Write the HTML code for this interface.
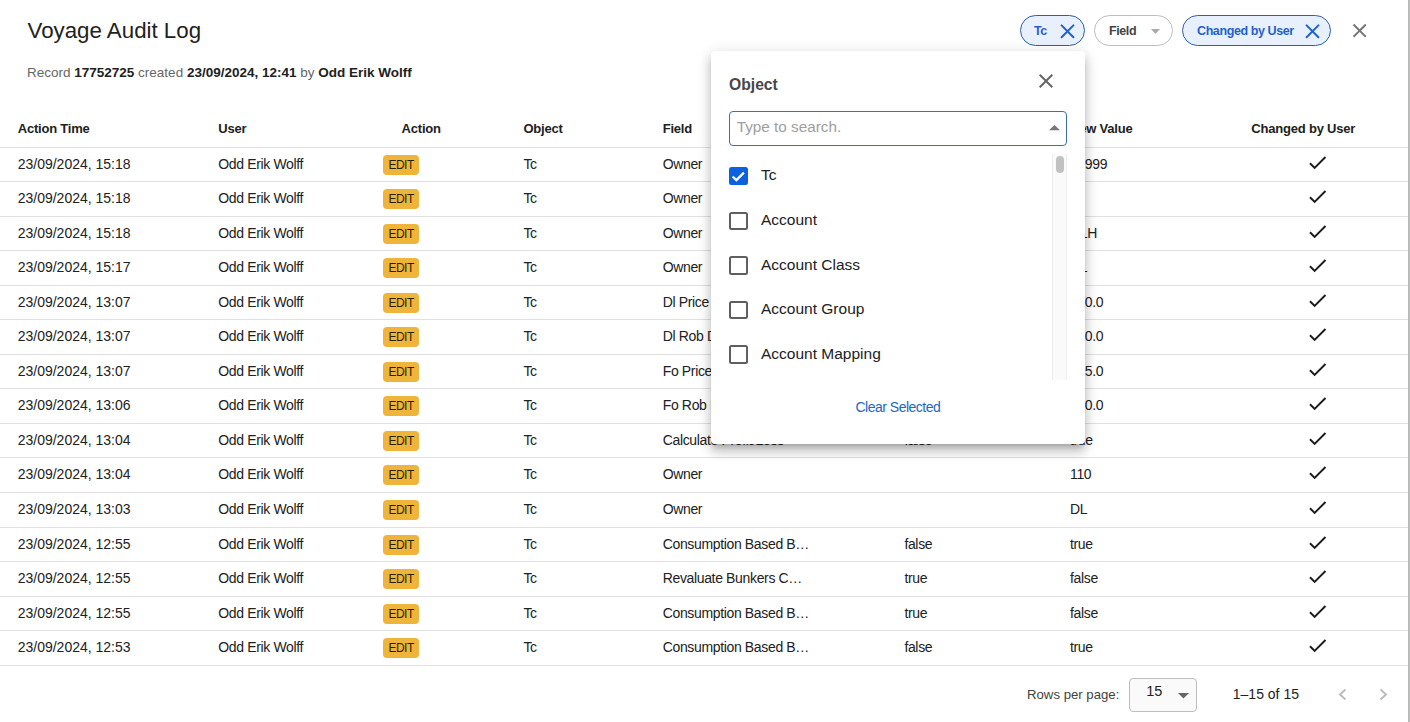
<!DOCTYPE html>
<html><head><meta charset="utf-8">
<style>
*{box-sizing:border-box;margin:0;padding:0}
html,body{width:1410px;height:722px;overflow:hidden;background:#bdbdbd;font-family:"Liberation Sans",sans-serif;color:#212121}
.dlg{position:absolute;left:0;top:0;width:1408px;height:740px;background:#fff;border-radius:0 0 4px 0;overflow:hidden}
.a{position:absolute;white-space:nowrap;line-height:1}
.title{left:27.5px;top:20px;font-size:22.3px;color:#212121}
.sub{left:27px;top:65.8px;font-size:13.5px;color:#666}
.sub b{color:#212121}
.hd{font-size:13px;font-weight:bold;letter-spacing:-0.2px;color:#212121}
.line{position:absolute;left:0;width:1408px;height:1px;background:#e0e0e0}
.c{font-size:14px;letter-spacing:-0.35px;color:#212121}
.edit{position:absolute;width:35.5px;height:19.5px;border-radius:4px;background:#efb43a;font-size:12px;letter-spacing:-0.5px;color:#2a1f00;line-height:21px;text-align:center;padding-left:0.5px}
.chip{position:absolute;top:15.3px;height:30.4px;border-radius:16px;border:1.3px solid #2d5eae;background:#e8f0fd}
.chip span{position:absolute;font-size:12.5px;font-weight:bold;letter-spacing:-0.4px;color:#1f62c9;line-height:1;top:8.5px}
.pop{position:absolute;left:711px;top:51px;width:374px;height:392.7px;background:#fff;border-radius:4px;
 box-shadow:0px 5px 5px -3px rgba(0,0,0,0.2),0px 8px 10px 1px rgba(0,0,0,0.14),0px 3px 14px 2px rgba(0,0,0,0.12)}
.cb{position:absolute;left:18px;width:18.5px;height:18.5px;border:2px solid #5f5f5f;border-radius:2.5px}
.cbl{position:absolute;left:50px;font-size:15.5px;color:#212121;line-height:1}
</style></head><body>
<div class="dlg">
  <div class="a title">Voyage Audit Log</div>
  <div class="a sub">Record <b>17752725</b> created <b>23/09/2024, 12:41</b> by <b>Odd Erik Wolff</b></div>

  <!-- chips -->
  <div class="chip" style="left:1020px;width:65px"><span style="left:13px">Tc</span>
    <svg style="position:absolute;left:38.5px;top:7.6px" width="16" height="16" viewBox="0 0 16 16"><path d="M1.6 1.4L13.4 13.2M13.4 1.4L1.6 13.2" stroke="#1f62c9" stroke-width="2" stroke-linecap="round"/></svg>
  </div>
  <div class="chip" style="left:1094px;width:79px;border:1px solid #bdbdbd;background:#fff"><span style="left:14px;color:#444">Field</span>
    <svg style="position:absolute;left:56px;top:13px" width="9" height="6" viewBox="0 0 9 6"><path d="M0 0L9 0L4.5 5z" fill="#aaa"/></svg>
  </div>
  <div class="chip" style="left:1182px;width:149px"><span style="left:14px">Changed by User</span>
    <svg style="position:absolute;left:121.5px;top:7.6px" width="16" height="16" viewBox="0 0 16 16"><path d="M1.6 1.4L13.4 13.2M13.4 1.4L1.6 13.2" stroke="#1f62c9" stroke-width="2" stroke-linecap="round"/></svg>
  </div>
  <svg style="position:absolute;left:1348.4px;top:18.7px" width="23.3" height="23.3" viewBox="0 0 24 24"><path fill="#757575" d="M19 6.41 17.59 5 12 10.59 6.41 5 5 6.41 10.59 12 5 17.59 6.41 19 12 13.41 17.59 19 19 17.59 13.41 12z"/></svg>

  <!-- table -->
  <div class="a hd" style="left:17.7px;top:122.0px">Action Time</div>
<div class="a hd" style="left:218.3px;top:122.0px">User</div>
<div class="a hd" style="left:401.6px;top:122.0px">Action</div>
<div class="a hd" style="left:523.4px;top:122.0px">Object</div>
<div class="a hd" style="left:662.7px;top:122.0px">Field</div>
<div class="a hd" style="left:904.4px;top:122.0px">Old Value</div>
<div class="a hd" style="left:1070px;top:122.0px">New Value</div>
<div class="a hd" style="left:1251.3px;top:122.0px">Changed by User</div>
<div class="line" style="top:147px"></div>
<div class="line" style="top:181px"></div>
<div class="line" style="top:216px"></div>
<div class="line" style="top:250px"></div>
<div class="line" style="top:285px"></div>
<div class="line" style="top:319px"></div>
<div class="line" style="top:354px"></div>
<div class="line" style="top:388px"></div>
<div class="line" style="top:423px"></div>
<div class="line" style="top:457px"></div>
<div class="line" style="top:492px"></div>
<div class="line" style="top:527px"></div>
<div class="line" style="top:561px"></div>
<div class="line" style="top:596px"></div>
<div class="line" style="top:630px"></div>
<div class="line" style="top:665px"></div>
<div class="a c" style="left:17.7px;top:157.10px;letter-spacing:0">23/09/2024, 15:18</div>
<div class="a c" style="left:218.3px;top:157.15px">Odd Erik Wolff</div>
<div class="edit" style="left:383.1px;top:155.20px">EDIT</div>
<div class="a c" style="left:523.4px;top:157.15px">Tc</div>
<div class="a c" style="left:662.7px;top:157.15px">Owner</div>
<div class="a c" style="left:1070px;top:157.15px">99999</div>
<svg style="position:absolute;left:1305.8px;top:151.10px" width="23.05" height="23.05" viewBox="0 0 24 24"><path fill="#1c1c1c" d="M9 16.17 4.83 12l-1.42 1.41L9 19 21 7l-1.41-1.41z"/></svg>
<div class="a c" style="left:17.7px;top:191.10px;letter-spacing:0">23/09/2024, 15:18</div>
<div class="a c" style="left:218.3px;top:191.15px">Odd Erik Wolff</div>
<div class="edit" style="left:383.1px;top:189.20px">EDIT</div>
<div class="a c" style="left:523.4px;top:191.15px">Tc</div>
<div class="a c" style="left:662.7px;top:191.15px">Owner</div>
<svg style="position:absolute;left:1305.8px;top:185.10px" width="23.05" height="23.05" viewBox="0 0 24 24"><path fill="#1c1c1c" d="M9 16.17 4.83 12l-1.42 1.41L9 19 21 7l-1.41-1.41z"/></svg>
<div class="a c" style="left:17.7px;top:226.10px;letter-spacing:0">23/09/2024, 15:18</div>
<div class="a c" style="left:218.3px;top:226.15px">Odd Erik Wolff</div>
<div class="edit" style="left:383.1px;top:224.20px">EDIT</div>
<div class="a c" style="left:523.4px;top:226.15px">Tc</div>
<div class="a c" style="left:662.7px;top:226.15px">Owner</div>
<div class="a c" style="left:1070px;top:226.15px">DLH</div>
<svg style="position:absolute;left:1305.8px;top:220.10px" width="23.05" height="23.05" viewBox="0 0 24 24"><path fill="#1c1c1c" d="M9 16.17 4.83 12l-1.42 1.41L9 19 21 7l-1.41-1.41z"/></svg>
<div class="a c" style="left:17.7px;top:260.10px;letter-spacing:0">23/09/2024, 15:17</div>
<div class="a c" style="left:218.3px;top:260.15px">Odd Erik Wolff</div>
<div class="edit" style="left:383.1px;top:258.20px">EDIT</div>
<div class="a c" style="left:523.4px;top:260.15px">Tc</div>
<div class="a c" style="left:662.7px;top:260.15px">Owner</div>
<div class="a c" style="left:1070px;top:260.15px">DL</div>
<svg style="position:absolute;left:1305.8px;top:254.10px" width="23.05" height="23.05" viewBox="0 0 24 24"><path fill="#1c1c1c" d="M9 16.17 4.83 12l-1.42 1.41L9 19 21 7l-1.41-1.41z"/></svg>
<div class="a c" style="left:17.7px;top:295.10px;letter-spacing:0">23/09/2024, 13:07</div>
<div class="a c" style="left:218.3px;top:295.15px">Odd Erik Wolff</div>
<div class="edit" style="left:383.1px;top:293.20px">EDIT</div>
<div class="a c" style="left:523.4px;top:295.15px">Tc</div>
<div class="a c" style="left:662.7px;top:295.15px">Dl Price Bunkers</div>
<div class="a c" style="left:904.4px;top:295.15px">100.0</div>
<div class="a c" style="left:1070px;top:295.15px">100.0</div>
<svg style="position:absolute;left:1305.8px;top:289.10px" width="23.05" height="23.05" viewBox="0 0 24 24"><path fill="#1c1c1c" d="M9 16.17 4.83 12l-1.42 1.41L9 19 21 7l-1.41-1.41z"/></svg>
<div class="a c" style="left:17.7px;top:329.10px;letter-spacing:0">23/09/2024, 13:07</div>
<div class="a c" style="left:218.3px;top:329.15px">Odd Erik Wolff</div>
<div class="edit" style="left:383.1px;top:327.20px">EDIT</div>
<div class="a c" style="left:523.4px;top:329.15px">Tc</div>
<div class="a c" style="left:662.7px;top:329.15px">Dl Rob Departure</div>
<div class="a c" style="left:904.4px;top:329.15px">100.0</div>
<div class="a c" style="left:1070px;top:329.15px">200.0</div>
<svg style="position:absolute;left:1305.8px;top:323.10px" width="23.05" height="23.05" viewBox="0 0 24 24"><path fill="#1c1c1c" d="M9 16.17 4.83 12l-1.42 1.41L9 19 21 7l-1.41-1.41z"/></svg>
<div class="a c" style="left:17.7px;top:364.10px;letter-spacing:0">23/09/2024, 13:07</div>
<div class="a c" style="left:218.3px;top:364.15px">Odd Erik Wolff</div>
<div class="edit" style="left:383.1px;top:362.20px">EDIT</div>
<div class="a c" style="left:523.4px;top:364.15px">Tc</div>
<div class="a c" style="left:662.7px;top:364.15px">Fo Price Bunkers</div>
<div class="a c" style="left:904.4px;top:364.15px">100.0</div>
<div class="a c" style="left:1070px;top:364.15px">125.0</div>
<svg style="position:absolute;left:1305.8px;top:358.10px" width="23.05" height="23.05" viewBox="0 0 24 24"><path fill="#1c1c1c" d="M9 16.17 4.83 12l-1.42 1.41L9 19 21 7l-1.41-1.41z"/></svg>
<div class="a c" style="left:17.7px;top:398.10px;letter-spacing:0">23/09/2024, 13:06</div>
<div class="a c" style="left:218.3px;top:398.15px">Odd Erik Wolff</div>
<div class="edit" style="left:383.1px;top:396.20px">EDIT</div>
<div class="a c" style="left:523.4px;top:398.15px">Tc</div>
<div class="a c" style="left:662.7px;top:398.15px">Fo Rob Departure</div>
<div class="a c" style="left:904.4px;top:398.15px">100.0</div>
<div class="a c" style="left:1070px;top:398.15px">300.0</div>
<svg style="position:absolute;left:1305.8px;top:392.10px" width="23.05" height="23.05" viewBox="0 0 24 24"><path fill="#1c1c1c" d="M9 16.17 4.83 12l-1.42 1.41L9 19 21 7l-1.41-1.41z"/></svg>
<div class="a c" style="left:17.7px;top:433.10px;letter-spacing:0">23/09/2024, 13:04</div>
<div class="a c" style="left:218.3px;top:433.15px">Odd Erik Wolff</div>
<div class="edit" style="left:383.1px;top:431.20px">EDIT</div>
<div class="a c" style="left:523.4px;top:433.15px">Tc</div>
<div class="a c" style="left:662.7px;top:433.15px">Calculate Profit/Loss</div>
<div class="a c" style="left:904.4px;top:433.15px">false</div>
<div class="a c" style="left:1070px;top:433.15px">true</div>
<svg style="position:absolute;left:1305.8px;top:427.10px" width="23.05" height="23.05" viewBox="0 0 24 24"><path fill="#1c1c1c" d="M9 16.17 4.83 12l-1.42 1.41L9 19 21 7l-1.41-1.41z"/></svg>
<div class="a c" style="left:17.7px;top:467.10px;letter-spacing:0">23/09/2024, 13:04</div>
<div class="a c" style="left:218.3px;top:467.15px">Odd Erik Wolff</div>
<div class="edit" style="left:383.1px;top:465.20px">EDIT</div>
<div class="a c" style="left:523.4px;top:467.15px">Tc</div>
<div class="a c" style="left:662.7px;top:467.15px">Owner</div>
<div class="a c" style="left:1070px;top:467.15px">110</div>
<svg style="position:absolute;left:1305.8px;top:461.10px" width="23.05" height="23.05" viewBox="0 0 24 24"><path fill="#1c1c1c" d="M9 16.17 4.83 12l-1.42 1.41L9 19 21 7l-1.41-1.41z"/></svg>
<div class="a c" style="left:17.7px;top:502.10px;letter-spacing:0">23/09/2024, 13:03</div>
<div class="a c" style="left:218.3px;top:502.15px">Odd Erik Wolff</div>
<div class="edit" style="left:383.1px;top:500.20px">EDIT</div>
<div class="a c" style="left:523.4px;top:502.15px">Tc</div>
<div class="a c" style="left:662.7px;top:502.15px">Owner</div>
<div class="a c" style="left:1070px;top:502.15px">DL</div>
<svg style="position:absolute;left:1305.8px;top:496.10px" width="23.05" height="23.05" viewBox="0 0 24 24"><path fill="#1c1c1c" d="M9 16.17 4.83 12l-1.42 1.41L9 19 21 7l-1.41-1.41z"/></svg>
<div class="a c" style="left:17.7px;top:537.10px;letter-spacing:0">23/09/2024, 12:55</div>
<div class="a c" style="left:218.3px;top:537.15px">Odd Erik Wolff</div>
<div class="edit" style="left:383.1px;top:535.20px">EDIT</div>
<div class="a c" style="left:523.4px;top:537.15px">Tc</div>
<div class="a c" style="left:662.7px;top:537.15px">Consumption Based B…</div>
<div class="a c" style="left:904.4px;top:537.15px">false</div>
<div class="a c" style="left:1070px;top:537.15px">true</div>
<svg style="position:absolute;left:1305.8px;top:531.10px" width="23.05" height="23.05" viewBox="0 0 24 24"><path fill="#1c1c1c" d="M9 16.17 4.83 12l-1.42 1.41L9 19 21 7l-1.41-1.41z"/></svg>
<div class="a c" style="left:17.7px;top:571.10px;letter-spacing:0">23/09/2024, 12:55</div>
<div class="a c" style="left:218.3px;top:571.15px">Odd Erik Wolff</div>
<div class="edit" style="left:383.1px;top:569.20px">EDIT</div>
<div class="a c" style="left:523.4px;top:571.15px">Tc</div>
<div class="a c" style="left:662.7px;top:571.15px">Revaluate Bunkers C…</div>
<div class="a c" style="left:904.4px;top:571.15px">true</div>
<div class="a c" style="left:1070px;top:571.15px">false</div>
<svg style="position:absolute;left:1305.8px;top:565.10px" width="23.05" height="23.05" viewBox="0 0 24 24"><path fill="#1c1c1c" d="M9 16.17 4.83 12l-1.42 1.41L9 19 21 7l-1.41-1.41z"/></svg>
<div class="a c" style="left:17.7px;top:606.10px;letter-spacing:0">23/09/2024, 12:55</div>
<div class="a c" style="left:218.3px;top:606.15px">Odd Erik Wolff</div>
<div class="edit" style="left:383.1px;top:604.20px">EDIT</div>
<div class="a c" style="left:523.4px;top:606.15px">Tc</div>
<div class="a c" style="left:662.7px;top:606.15px">Consumption Based B…</div>
<div class="a c" style="left:904.4px;top:606.15px">true</div>
<div class="a c" style="left:1070px;top:606.15px">false</div>
<svg style="position:absolute;left:1305.8px;top:600.10px" width="23.05" height="23.05" viewBox="0 0 24 24"><path fill="#1c1c1c" d="M9 16.17 4.83 12l-1.42 1.41L9 19 21 7l-1.41-1.41z"/></svg>
<div class="a c" style="left:17.7px;top:640.10px;letter-spacing:0">23/09/2024, 12:53</div>
<div class="a c" style="left:218.3px;top:640.15px">Odd Erik Wolff</div>
<div class="edit" style="left:383.1px;top:638.20px">EDIT</div>
<div class="a c" style="left:523.4px;top:640.15px">Tc</div>
<div class="a c" style="left:662.7px;top:640.15px">Consumption Based B…</div>
<div class="a c" style="left:904.4px;top:640.15px">false</div>
<div class="a c" style="left:1070px;top:640.15px">true</div>
<svg style="position:absolute;left:1305.8px;top:634.10px" width="23.05" height="23.05" viewBox="0 0 24 24"><path fill="#1c1c1c" d="M9 16.17 4.83 12l-1.42 1.41L9 19 21 7l-1.41-1.41z"/></svg>

  <!-- footer -->
  <div class="a" style="left:1027px;top:688.3px;font-size:13.2px;color:#424242">Rows per page:</div>
  <div style="position:absolute;left:1129.2px;top:677.5px;width:67.4px;height:34px;border:1px solid #bdbdbd;border-radius:4px;background:#fafafa">
    <div class="a" style="left:16px;top:5.7px;font-size:14.5px;color:#212121">15</div>
    <svg style="position:absolute;left:48px;top:14px" width="11" height="6" viewBox="0 0 11 6"><path d="M0 0L11 0L5.5 5.6z" fill="#666"/></svg>
  </div>
  <div class="a" style="left:1232.8px;top:686.9px;font-size:14px;color:#212121">1–15 of 15</div>
  <svg style="position:absolute;left:1333.5px;top:685.5px" width="16" height="16" viewBox="0 0 16 16"><path d="M11.5 3.5L6 8.5L11.5 13.5" fill="none" stroke="#bdbdbd" stroke-width="2"/></svg>
  <svg style="position:absolute;left:1375.5px;top:685.5px" width="16" height="16" viewBox="0 0 16 16"><path d="M4.5 3.5L10 8.5L4.5 13.5" fill="none" stroke="#bdbdbd" stroke-width="2"/></svg>
</div>

<!-- popover -->
<div class="pop">
  <div class="a" style="left:18px;top:26.2px;font-size:15.7px;font-weight:bold;color:#484848">Object</div>
  <svg style="position:absolute;left:323.3px;top:17.5px" width="24" height="24" viewBox="0 0 24 24"><path fill="#666" d="M19 6.41 17.59 5 12 10.59 6.41 5 5 6.41 10.59 12 5 17.59 6.41 19 12 13.41 17.59 19 19 17.59 13.41 12z"/></svg>
  <div style="position:absolute;left:18.4px;top:59.5px;width:337.3px;height:35px;border:1px solid #3a6fb5;border-radius:4px">
    <div class="a" style="left:6.3px;top:7.3px;font-size:15.3px;color:#9e9e9e">Type to search.</div>
    <svg style="position:absolute;left:319px;top:13px" width="11" height="6" viewBox="0 0 11 6"><path d="M0 5.2L11 5.2L5.5 0z" fill="#777"/></svg>
  </div>
  <div style="position:absolute;left:341.3px;top:102.7px;width:14.4px;height:226.7px;border-left:1px solid #eee;border-right:1px solid #eee;background:#fafafa">
    <div style="position:absolute;left:3px;top:2px;width:7.8px;height:17px;border-radius:4px;background:#c1c1c1"></div>
  </div>
  <div class="cb" style="top:115.8px;background:#0b61de;border-color:#0b61de">
    <svg style="position:absolute;left:-2px;top:-2px" width="18.5" height="18.5" viewBox="0 0 18 18"><path d="M3.5 9.2L7.2 12.8L14.5 5.5" fill="none" stroke="#fff" stroke-width="2.2"/></svg>
  </div>
  <div class="cbl" style="top:116.4px">Tc</div>
  <div class="cb" style="top:160.5px"></div>
  <div class="cbl" style="top:161px">Account</div>
  <div class="cb" style="top:205.1px"></div>
  <div class="cbl" style="top:205.7px">Account Class</div>
  <div class="cb" style="top:249.8px"></div>
  <div class="cbl" style="top:250.3px">Account Group</div>
  <div class="cb" style="top:294.4px"></div>
  <div class="cbl" style="top:295px">Account Mapping</div>
  <div class="a" style="left:144.5px;top:349.1px;font-size:14px;letter-spacing:-0.5px;color:#2068c6">Clear Selected</div>
</div>
<div style="position:absolute;left:1408px;top:0;width:2px;height:722px;background:linear-gradient(90deg,#b3b3b3,#c3c5c7)"></div>
</body></html>
